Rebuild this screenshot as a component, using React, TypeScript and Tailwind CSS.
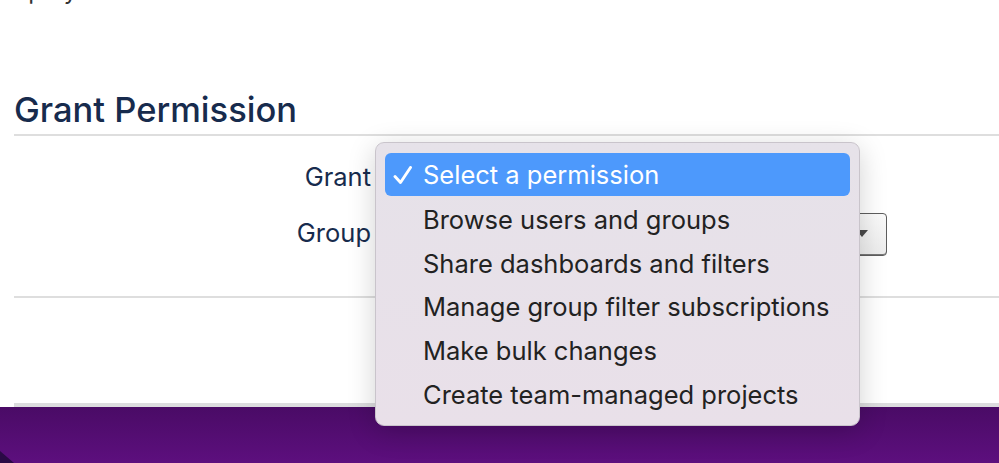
export default function App() {
  const options = [
    'Browse users and groups',
    'Share dashboards and filters',
    'Manage group filter subscriptions',
    'Make bulk changes',
    'Create team-managed projects',
  ];

  return (
    <div
      className="relative h-[463px] w-[999px] overflow-hidden bg-white"
      style={{ fontFamily: 'Inter, "Noto Sans", sans-serif' }}
    >
      <div className="flex h-[407px] flex-col pl-[14px]">
        {/* clipped line from the section above */}
        <div className="-mt-[22px] h-[26px] overflow-hidden text-[24px] leading-[26px] text-[#333]">up by</div>

        <h2 className="mt-[86px] border-b-2 border-[#dedede] pb-[4px] text-[34.5px] font-medium leading-[40px] text-[#172b4d]">
          Grant Permission
        </h2>

        <div className="flex flex-col border-b-2 border-[#dedede] pt-[18px] pb-[40px]">
          <div className="flex h-[46px] items-center">
            <label className="w-[357px] text-right text-[25.5px] text-[#172b4d]">Grant</label>
            <div className="ml-[14px] h-[42px] w-[460px] rounded-[4px] bg-[#f4f4f4]" />
          </div>
          <div className="mt-[10px] flex h-[46px] items-center">
            <label className="w-[357px] text-right text-[25.5px] text-[#172b4d]">Group</label>
            <div className="ml-[14px] mt-[2px] flex h-[43px] w-[502px] items-center justify-end rounded-[4px] border border-[#5e5e5e] bg-gradient-to-b from-[#fafafa] to-[#ececec] pr-[18px] shadow-[inset_0_-1px_0_#777]">
              <svg width="12" height="8" viewBox="0 0 12 8">
                <path d="M0 0 H12 L6 7 Z" fill="#4a4a4a" />
              </svg>
            </div>
          </div>
        </div>

        <div className="flex-1" />
        <div className="h-[4px] bg-[#dcdcde]" />
      </div>

      <div className="relative h-[56px] bg-gradient-to-b from-[#4a0b66] to-[#5d0f7e]">
        <svg className="absolute bottom-0 left-0" width="16" height="16" viewBox="0 0 16 16">
          <path d="M0 4 L14 16 H0 Z" fill="#2a0a45" />
        </svg>
      </div>

      {/* open select menu */}
      <div className="absolute left-[375px] top-[142px] w-[485px] rounded-[9px] border border-[#c9c4cb] bg-gradient-to-b from-[#e6e2e9] to-[#e9e0e9] px-[9px] pt-[10px] pb-[10px] shadow-[0_6px_28px_rgba(0,0,0,0.18)]">
        <div className="flex h-[43px] items-center rounded-[6px] bg-[#4d99fc] pt-[2px] text-[25.5px] text-white">
          <span className="ml-[8px] w-[30px]">
            <svg width="20" height="19" viewBox="0 0 20 19">
              <path d="M2 10.5 L7.5 16.5 L17.5 1.5" stroke="white" strokeWidth="2.9" fill="none" strokeLinecap="round" strokeLinejoin="round" />
            </svg>
          </span>
          Select a permission
        </div>
        {options.map((o) => (
          <div key={o} className="flex h-[43.8px] items-center pl-[38px] pt-[4px] text-[25.5px] text-[#222]">
            {o}
          </div>
        ))}
      </div>
    </div>
  );
}
